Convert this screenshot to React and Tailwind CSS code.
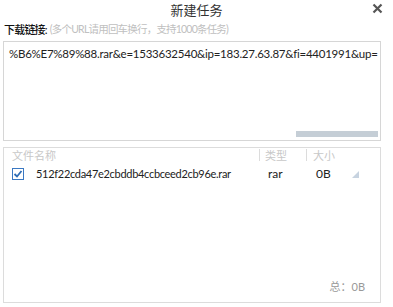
export default function App() {
  const cjk = { fontFamily: 'Lato, "Noto Sans CJK SC", sans-serif' };
  return (
    <div className="w-[393px] h-[307px] bg-white relative overflow-hidden text-[12px] text-[#222]" style={cjk}>
      <div className="h-[20px] flex items-center justify-center text-[13px] text-[#333] pt-[1px]">新建任务</div>
      <div className="absolute right-[10px] top-[3px] text-[#555]">
        <svg width="11" height="11" viewBox="0 0 11 11"><path d="M1.5 1.5L9.5 9.5M9.5 1.5L1.5 9.5" stroke="#555" strokeWidth="2.2" /></svg>
      </div>
      <div className="flex items-center h-[18px] pl-[4px] text-[11px] leading-none">
        <span className="text-[#111] font-medium tracking-[-0.8px]">下载链接:</span>
        <span className="ml-[3px] text-[10.5px] text-[#c0c0c0] tracking-[-0.8px]">(多个URL请用回车换行，支持1000条任务)</span>
      </div>
      <div className="ml-[3px] mt-[3px] w-[378px] h-[100px] border border-[#d6d6d6] relative">
        <div className="pl-[5px] pt-[3px] text-[11.5px] tracking-[-0.25px] whitespace-nowrap overflow-hidden">%B6%E7%89%88.rar&amp;e=1533632540&amp;ip=183.27.63.87&amp;fi=4401991&amp;up=</div>
        <div className="absolute left-[292px] bottom-[3px] w-[82px] h-[6px] bg-[#c5ced6]"></div>
      </div>
      <div className="ml-[3px] mt-[6px] w-[378px] h-[156px] border border-[#dcdcdc] relative">
        <div className="flex h-[14px] items-center text-[11px] text-[#c8c8c8] leading-none">
          <div className="w-[255px] pl-[8px]">文件名称</div>
          <div className="w-[47px] border-l border-[#dcdcdc] pl-[5px] h-[12px] flex items-center">类型</div>
          <div className="border-l border-[#dcdcdc] pl-[6px] h-[12px] flex items-center">大小</div>
        </div>
        <div className="flex items-center h-[20px] mt-[2px]">
          <div className="w-[32px] pl-[8px] flex items-center">
            <svg width="12" height="12" viewBox="0 0 12 12">
              <rect x="0.5" y="0.5" width="11" height="11" fill="#fff" stroke="#3a78c2" />
              <path d="M2.5 6L5 8.5L9.5 3" stroke="#2f6db5" strokeWidth="1.8" fill="none" />
            </svg>
          </div>
          <div className="w-[232px] text-[11px] tracking-[-0.3px]">512f22cda47e2cbddb4ccbceed2cb96e.rar</div>
          <div className="w-[48px] text-[12px]">rar</div>
          <div className="w-[36px] text-[12px]">0B</div>
          <svg width="7" height="7" viewBox="0 0 7 7" className="mt-[1px]"><path d="M7 0L7 7L0 7Z" fill="#c7d3e0" /></svg>
        </div>
        <div className="absolute right-[15px] bottom-[7px] text-[11px] text-[#999]">总：0B</div>
      </div>
    </div>
  );
}
